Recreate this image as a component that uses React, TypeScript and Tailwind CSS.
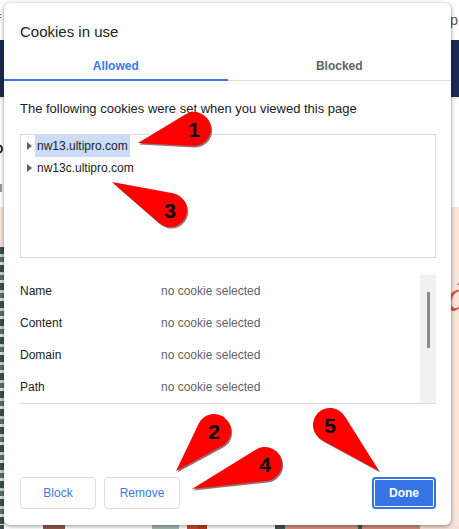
import React from 'react';

type Callout = { n: string; cx: number; cy: number; tx: number; ty: number };

const callouts: Callout[] = [
  { n: '1', cx: 194, cy: 129, tx: 138, ty: 143 },
  { n: '2', cx: 214, cy: 431, tx: 176, ty: 471 },
  { n: '3', cx: 170, cy: 210, tx: 112, ty: 182 },
  { n: '4', cx: 265, cy: 464, tx: 192, ty: 489 },
  { n: '5', cx: 330, cy: 425, tx: 379, ty: 471 },
];

// circle + tangent tail pointing at (tx, ty)
const teardrop = ({ cx, cy, tx, ty }: Callout, r = 17) => {
  const dx = cx - tx;
  const dy = cy - ty;
  const d = Math.sqrt(dx * dx + dy * dy);
  const a = Math.atan2(dy, dx);
  const b = Math.asin(r / d);
  const len = Math.sqrt(d * d - r * r);
  const p1x = tx + len * Math.cos(a + b);
  const p1y = ty + len * Math.sin(a + b);
  const p2x = tx + len * Math.cos(a - b);
  const p2y = ty + len * Math.sin(a - b);
  return `M${tx} ${ty} L${p1x.toFixed(2)} ${p1y.toFixed(2)} A${r} ${r} 0 1 0 ${p2x.toFixed(2)} ${p2y.toFixed(2)} Z`;
};

const details = ['Name', 'Content', 'Domain', 'Path'];

const Callouts: React.FC = () => (
  <svg className="absolute inset-0 pointer-events-none" width={459} height={529} viewBox="0 0 459 529">
    {callouts.map((c) => (
      <g key={c.n}>
        <path d={teardrop(c)} transform="translate(1.2 1.5)" fill="#3a0000" opacity={0.55} />
        <path d={teardrop(c)} fill="#ff0000" />
        <text
          x={c.cx}
          y={c.cy + 7.5}
          textAnchor="middle"
          fontSize={21}
          fontWeight="bold"
          fontFamily="'Liberation Sans', Arial, sans-serif"
          fill="#000"
        >
          {c.n}
        </text>
      </g>
    ))}
  </svg>
);

const App: React.FC = () => {
  return (
    <div className="relative w-[459px] h-[529px] overflow-hidden bg-white font-['Liberation_Sans',Arial,sans-serif]">
      {/* page behind the dialog */}
      <div className="flex flex-col h-full">
        <div className="h-[40px] flex justify-between items-start pt-[12px]">
          <span className="-ml-[3px] text-[15px] leading-[16px] text-[#a0621c]">f</span>
          <span className="mr-[1px] text-[15px] leading-[16px] text-[#555]">p</span>
        </div>
        <div className="h-[57px] bg-[#1b2a4f]" />
        <div className="h-[2px] bg-[#ececec]" />
        <div className="h-[108px] flex flex-col pt-[45px]">
          <div className="-ml-[7px] w-[10px] h-[10px] rounded-full border-2 border-[#222]" />
          <div className="mt-[30px] w-[2px] h-[8px] bg-[#999]" />
        </div>
        <div className="flex-1 flex bg-[#fae5dc]">
          <div className="w-[4px] mt-[40px] bg-[repeating-linear-gradient(180deg,#3d4e4e_0px,#3d4e4e_7px,#c7d3cc_7px,#c7d3cc_10px,#5c6e6a_10px,#5c6e6a_15px,#e9ddd4_15px,#e9ddd4_18px)]" />
          <div className="flex-1" />
          <div className="pt-[66px] -mr-[10px]">
            <span className="italic text-[46px] leading-[46px] text-[#d9553f] font-['Liberation_Serif',serif]">á</span>
          </div>
        </div>
        <div className="h-[4px] flex bg-white">
          <div className="w-[4px] bg-[#3d4e4e]" />
          <div className="w-[39px]" />
          <div className="w-[22px] bg-[#8f5a4c]" />
          <div className="w-[87px]" />
          <div className="w-[27px] bg-[#a3bcb0]" />
          <div className="w-[8px]" />
          <div className="w-[11px] bg-[#c8452f]" />
          <div className="w-[9px] bg-[#b83a28]" />
          <div className="w-[68px]" />
          <div className="w-[10px] bg-[#425353]" />
          <div className="w-[73px] bg-[#d3937d]" />
          <div className="w-[4px] bg-[#425353]" />
          <div className="w-[58px] bg-[#cf8f7a]" />
          <div className="flex-1 bg-[#f7e0d6]" />
        </div>
      </div>

      {/* dialog */}
      <div className="absolute left-[4px] top-[3px] w-[447px] h-[522px] bg-white rounded-[6px] shadow-[0_1px_4px_rgba(0,0,0,0.45)] flex flex-col text-[#202124]">
        <div className="pt-[19px] px-[16px] h-[38px] text-[15px] leading-[20px]">Cookies in use</div>

        <div className="flex h-[40px] text-[12px] leading-[16px] font-bold">
          <div className="flex-1 flex justify-center pt-[17px] border-b-2 border-[#3b78e7] text-[#3b78e7]">Allowed</div>
          <div className="flex-1 flex justify-center pt-[17px] border-b border-[#dadce0] text-[#5f6368]">
            <span className="mb-[1px]">Blocked</span>
          </div>
        </div>

        <div className="mt-[20px] px-[16px] text-[13px] leading-[16px]">The following cookies were set when you viewed this page</div>

        <div className="mt-[17px] ml-[16px] mr-[15px] h-[124px] border border-[#dadce0] text-[12px]">
          <div className="flex items-center h-[22px] pl-[6px]">
            <span className="w-0 h-0 border-y-[4px] border-y-transparent border-l-[5px] border-l-[#5f6368]" />
            <span className="ml-[3px] px-[2px] h-[22px] leading-[22px] bg-[#cbdcf7]">nw13.ultipro.com</span>
          </div>
          <div className="flex items-center h-[22px] pl-[6px]">
            <span className="w-0 h-0 border-y-[4px] border-y-transparent border-l-[5px] border-l-[#5f6368]" />
            <span className="ml-[3px] px-[2px] leading-[22px]">nw13c.ultipro.com</span>
          </div>
        </div>

        <div className="mt-[17px] ml-[16px] mr-[15px] flex border-b border-[#dadce0] text-[12px]">
          <div className="flex-1 flex flex-col">
            {details.map((label) => (
              <div key={label} className="h-[32px] flex items-center">
                <span className="w-[141px]">{label}</span>
                <span className="text-[#5f6368]">no cookie selected</span>
              </div>
            ))}
          </div>
          <div className="w-[16px] h-[128px] bg-[#f1f1f1] flex justify-center pt-[17px]">
            <div className="w-[3px] h-[56px] bg-[#8a8a8a]" />
          </div>
        </div>

        <div className="mt-auto pb-[16px] px-[16px] pr-[15px] flex items-center text-[12px]">
          <button className="w-[76px] h-[32px] rounded-[4px] border border-[#dadce0] text-[#3b78e7] font-medium">Block</button>
          <button className="ml-[8px] w-[76px] h-[32px] rounded-[4px] border border-[#dadce0] text-[#3b78e7] font-medium">Remove</button>
          <div className="flex-1" />
          <button className="w-[64px] h-[32px] rounded-[4px] bg-[#3574e3] text-white font-bold shadow-[inset_0_0_0_2px_#3574e3,inset_0_0_0_3px_#ffffff]">Done</button>
        </div>
      </div>

      <Callouts />
    </div>
  );
};

export default App;
